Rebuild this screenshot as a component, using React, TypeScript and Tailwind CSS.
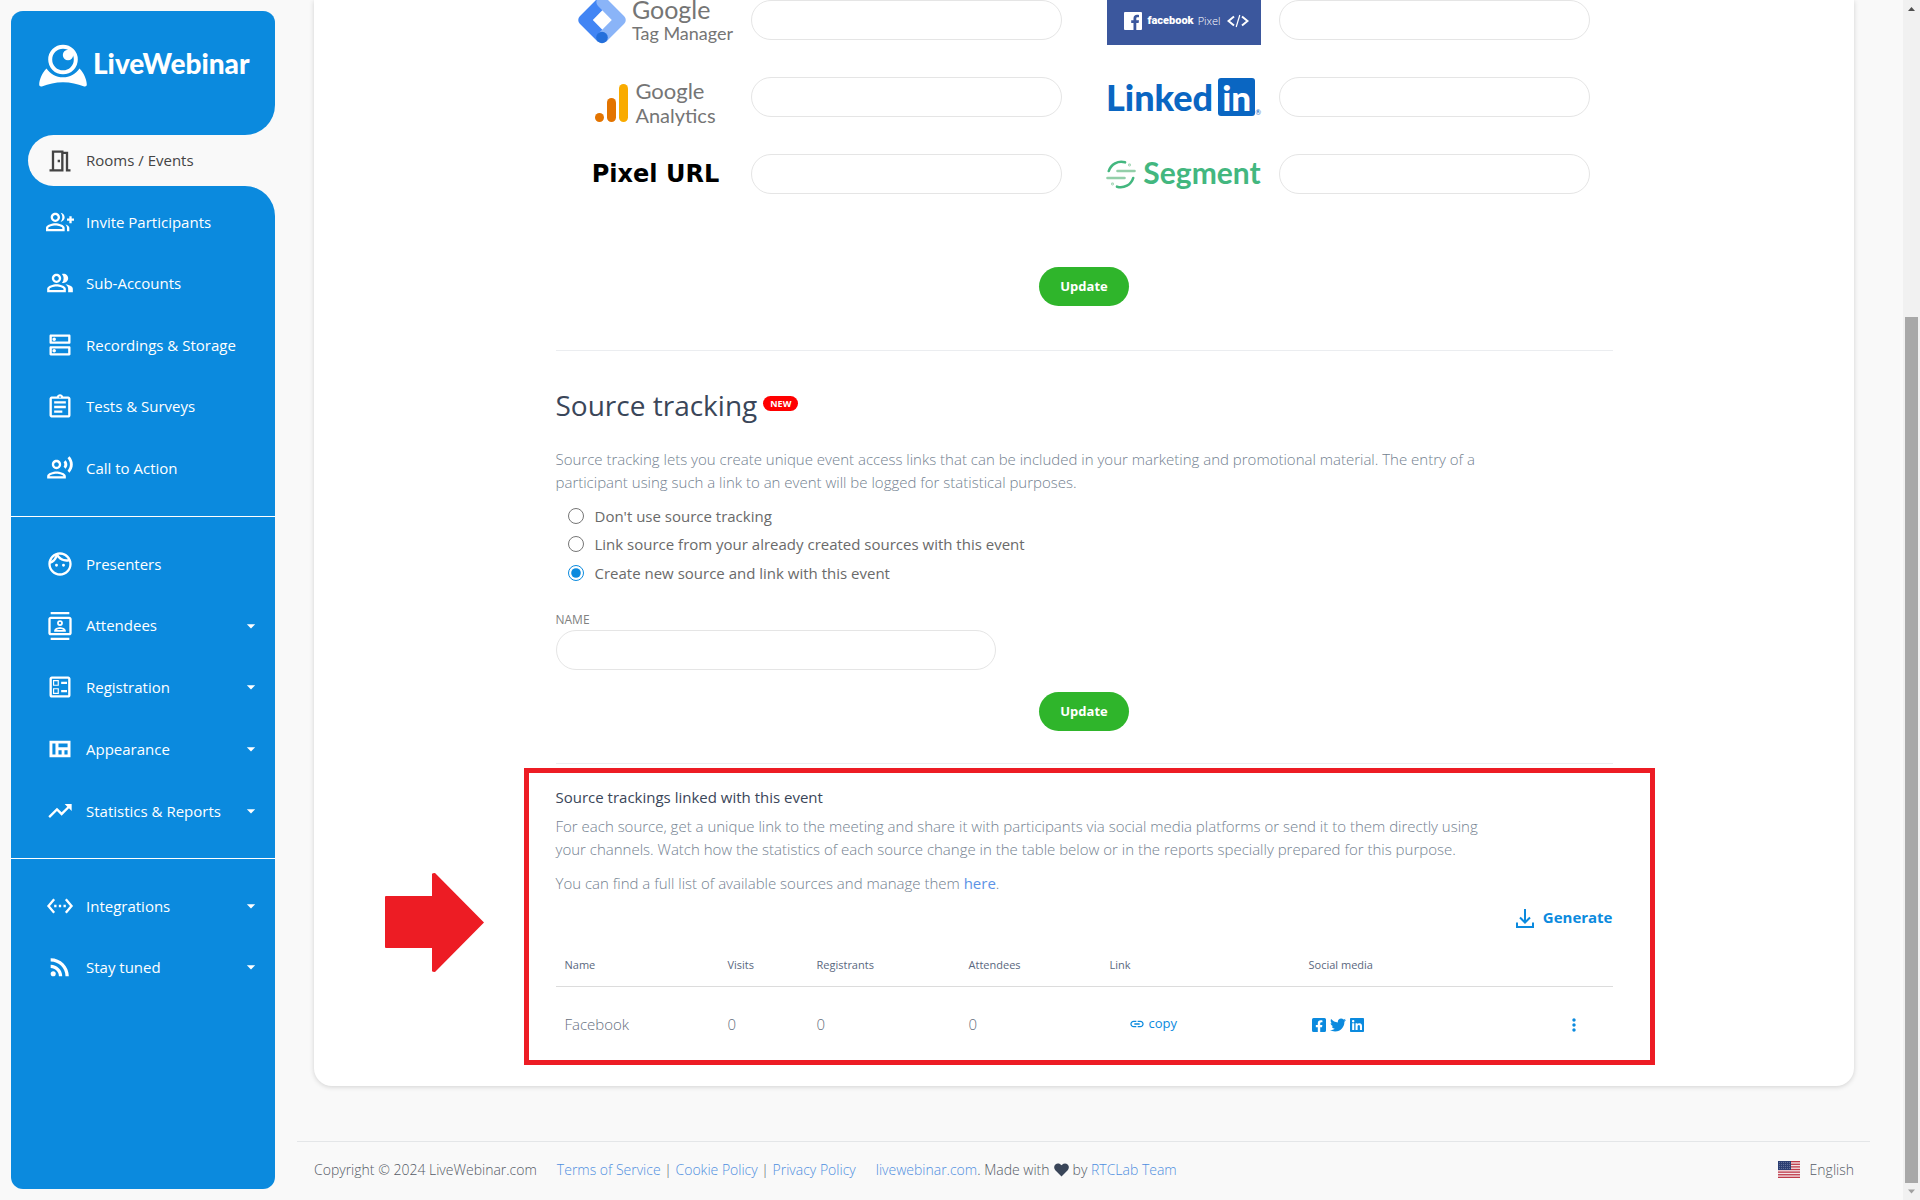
import type { ComponentType, ReactNode } from "react";
import {
  MdArrowDropDown,
  MdLink,
  MdMoreVert,
  MdOutlineAssignment,
  MdOutlineBallot,
  MdOutlineContacts,
  MdOutlineDns,
  MdOutlineFace,
  MdOutlineGroupAdd,
  MdOutlineMeetingRoom,
  MdOutlinePeopleAlt,
  MdOutlineRecordVoiceOver,
  MdRssFeed,
  MdSettingsEthernet,
  MdTrendingUp,
} from "react-icons/md";
import { FaFacebookSquare, FaLinkedin, FaTwitter } from "react-icons/fa";

type Item = { label: string; icon: ComponentType<{ className?: string }>; menu?: boolean };

function QuiltIcon({ className }: { className?: string }) {
  return (
    <svg viewBox="0 0 24 24" className={className} fill="currentColor" fillRule="evenodd" aria-hidden="true">
      <path d="M3 5h18v14H3zM5.500 7.300v9.400h2.600V7.300zM10.700 7.300v3.200h7.800V7.300zM10.700 13v3.700h2.700V13zM15.800 13v3.700h2.700V13z" />
    </svg>
  );
}

const primary: Item[] = [
  { label: "Invite Participants", icon: MdOutlineGroupAdd },
  { label: "Sub-Accounts", icon: MdOutlinePeopleAlt },
  { label: "Recordings & Storage", icon: MdOutlineDns },
  { label: "Tests & Surveys", icon: MdOutlineAssignment },
  { label: "Call to Action", icon: MdOutlineRecordVoiceOver },
];

const secondary: Item[] = [
  { label: "Presenters", icon: MdOutlineFace },
  { label: "Attendees", icon: MdOutlineContacts, menu: true },
  { label: "Registration", icon: MdOutlineBallot, menu: true },
  { label: "Appearance", icon: QuiltIcon, menu: true },
  { label: "Statistics & Reports", icon: MdTrendingUp, menu: true },
];

const tertiary: Item[] = [
  { label: "Integrations", icon: MdSettingsEthernet, menu: true },
  { label: "Stay tuned", icon: MdRssFeed, menu: true },
];

function NavItem({ item }: { item: Item }) {
  const Icon = item.icon;
  return (
    <li className="flex items-center">
      <a href="#" className="flex flex-1 items-center pr-[14px] pl-[35px] text-[15px] font-medium text-white">
        <Icon className="mr-3 size-7 shrink-0" />
        <span className="flex-1">{item.label}</span>
        {item.menu && <MdArrowDropDown className="size-5" />}
      </a>
    </li>
  );
}

function WebcamLogo() {
  return (
    <svg viewBox="0 0 48 43" className="h-[43px] w-12 shrink-0" fill="#fff" aria-hidden="true">
      <circle cx="24" cy="15.500" r="12.800" fill="none" stroke="#fff" strokeWidth="4" />
      <circle cx="29" cy="11" r="5.200" />
      <path d="M7.500 24.500C3 29 .2 36 .2 40.500c0 1.500 1 2.300 2.600 1.900C10 40 16 38.200 24 38.200S38 40 45.200 42.400c1.600.4 2.600-.4 2.600-1.900 0-4.500-2.800-11.500-7.300-16C36.500 30 31 33.300 24 33.300S11.500 30 7.500 24.500z" />
    </svg>
  );
}

function Sidebar() {
  return (
    <aside className="sticky top-0 h-screen w-[286px] shrink-0 p-[11px]">
      <nav className="flex h-full flex-col overflow-hidden rounded-xl bg-[#0b8ade]">
        <div className="bg-[#f9f9f9]">
          <div className="flex h-[124px] items-start gap-[6px] rounded-br-[30px] bg-[#0b8ade] pt-[33px] pl-7">
            <WebcamLogo />
            <span className="font-['Lato'] text-[28px] leading-[38px] font-black text-white">LiveWebinar</span>
          </div>
        </div>
        <div className="bg-[#0b8ade] pl-[17px]">
          <a href="#" className="flex h-[51px] items-center rounded-l-full bg-[#f9f9f9] pl-[18px] text-[15px] text-[#444]">
            <MdOutlineMeetingRoom className="mr-3 size-7" />
            Rooms / Events
          </a>
        </div>
        <div className="bg-[#f9f9f9]">
          <div className="rounded-tr-[30px] bg-[#0b8ade] pt-[5px] pb-[17px]">
            <ul className="grid h-[308px] auto-rows-fr">
              {primary.map((i) => (
                <NavItem key={i.label} item={i} />
              ))}
            </ul>
          </div>
        </div>
        <div className="border-y border-white py-4">
          <ul className="grid h-[309px] auto-rows-fr">
            {secondary.map((i) => (
              <NavItem key={i.label} item={i} />
            ))}
          </ul>
        </div>
        <ul className="mt-4 grid h-[123px] auto-rows-fr">
          {tertiary.map((i) => (
            <NavItem key={i.label} item={i} />
          ))}
        </ul>
      </nav>
    </aside>
  );
}

function TagManagerLogo() {
  return (
    <div className="flex items-center gap-[6px]">
      <svg viewBox="0 0 48 48" className="size-12 shrink-0" aria-hidden="true">
        <path d="M19.800 2.200 1.800 20.200a5.400 5.400 0 0 0 0 7.600l18 18 8.200-8.200L14.800 24 28 10.400z" fill="#4285f4" />
        <path d="M46.200 20.200 28 2a5.600 5.600 0 0 0-8 8l13.800 14L20.200 37.800l8 8 18-18a5.400 5.400 0 0 0 0-7.600z" fill="#8ab4f8" />
        <circle cx="24" cy="41.500" r="5.800" fill="#246fdb" />
      </svg>
      <div className="pt-[2px] font-['Lato'] whitespace-nowrap text-[#757575]">
        <div className="text-[25px] leading-[24px]">Google</div>
        <div className="text-[18px] leading-[24px]">Tag Manager</div>
      </div>
    </div>
  );
}

function AnalyticsLogo() {
  return (
    <div className="flex items-center gap-[6px] pt-[11px]">
      <svg viewBox="0 0 34 40" className="h-10 w-[34px] shrink-0" aria-hidden="true">
        <circle cx="4.500" cy="34.500" r="4.500" fill="#e37400" />
        <rect x="12" y="15" width="9" height="24" rx="4.500" fill="#e37400" />
        <rect x="24" y="1" width="9" height="38" rx="4.500" fill="#f9ab00" />
      </svg>
      <div className="font-['Lato'] whitespace-nowrap text-[#757575]">
        <div className="text-[22px] leading-[24px]">Google</div>
        <div className="text-[20px] leading-[24px]">Analytics</div>
      </div>
    </div>
  );
}

function FacebookPixelLogo() {
  return (
    <div className="flex h-[50px] w-full items-center bg-[#3b579d] pt-[2px] pl-[17px] text-[11px] text-white">
      <svg viewBox="0 0 18 18" className="mr-[6px] size-[18px] shrink-0" aria-hidden="true">
        <rect width="18" height="18" rx="1" fill="#fff" />
        <path d="M12.300 18v-7h2.300l.4-2.700h-2.700V6.600c0-.8.300-1.300 1.400-1.300H15V2.900c-.3 0-1.100-.1-2-.1-2.100 0-3.500 1.200-3.500 3.500v2H7.200V11h2.300v7z" fill="#3b579d" />
      </svg>
      <span className="mr-1 font-['Roboto'] font-black">facebook</span>
      <span className="mr-[6px] font-['Open_Sans'] font-light">Pixel</span>
      <svg viewBox="0 0 22 14" className="h-[14px] w-[22px] shrink-0" fill="none" stroke="#fff" strokeWidth="2" aria-hidden="true">
        <path d="M7 2.500 1.500 7 7 11.500M15 2.500 20.500 7 15 11.500" />
        <path d="M12.800 1 9.200 13" strokeWidth="1.200" />
      </svg>
    </div>
  );
}

function LinkedInLogo() {
  return (
    <div className="flex items-end text-[#0a66c2]">
      <span className="font-['Lato'] text-[36px] leading-[38px] font-black">Linked</span>
      <span className="ml-[5px] flex h-[38px] w-[37px] items-center justify-center rounded-[3px] bg-[#0a66c2] font-['Lato'] text-[35px] leading-[38px] font-black text-white">
        in
      </span>
      <span className="font-['Lato'] text-[7px] leading-[8px]">®</span>
    </div>
  );
}

function SegmentLogo() {
  return (
    <div className="flex items-center gap-[7px]">
      <svg viewBox="0 0 30 29" className="h-[29px] w-[30px] shrink-0" fill="none" strokeWidth="2.600" strokeLinecap="round" aria-hidden="true">
        <path d="M2.800 11A13 13 0 0 1 19 2.300M27.200 18A13 13 0 0 1 11 26.700" stroke="#43b77f" />
        <path d="M11.500 11H28.500M1.500 18H18.500" stroke="#93cfa9" />
        <circle cx="23.500" cy="5" r=".4" stroke="#93cfa9" strokeWidth="2" />
        <circle cx="6.500" cy="24" r=".4" stroke="#93cfa9" strokeWidth="2" />
      </svg>
      <span className="pb-1 font-['Lato'] text-[30px] leading-[36px] font-bold text-[#43b77f]">Segment</span>
    </div>
  );
}

function PixelUrlLogo() {
  return <span className="font-['DejaVu_Sans'] text-[24px] font-bold text-black">Pixel URL</span>;
}

const integrations: { name: string; logo: ReactNode }[] = [
  { name: "Google Tag Manager", logo: <TagManagerLogo /> },
  { name: "Facebook Pixel", logo: <FacebookPixelLogo /> },
  { name: "Google Analytics", logo: <AnalyticsLogo /> },
  { name: "LinkedIn", logo: <LinkedInLogo /> },
  { name: "Pixel URL", logo: <PixelUrlLogo /> },
  { name: "Segment", logo: <SegmentLogo /> },
];

function UpdateButton() {
  return (
    <button type="button" className="mx-auto block h-[39px] w-[90px] rounded-[20px] bg-[#2fb52b] text-[13px] font-bold text-white">
      Update
    </button>
  );
}

const sourceOptions = [
  "Don't use source tracking",
  "Link source from your already created sources with this event",
  "Create new source and link with this event",
];

function SourceTracking() {
  return (
    <section>
      <div className="mt-9 flex items-start gap-[6px]">
        <h2 className="text-[28px] leading-9 text-[#3a4659]">Source tracking</h2>
        <span className="mt-[9px] h-[15px] rounded-full bg-[#ff0000] px-[7px] text-[9px] leading-[15px] font-bold text-white">NEW</span>
      </div>
      <p className="mt-[25px] max-w-[950px] text-[15px] leading-[23px] font-light text-[#737f90]">
        Source tracking lets you create unique event access links that can be included in your marketing and promotional
        material. The entry of a participant using such a link to an event will be logged for statistical purposes.
      </p>
      <fieldset className="mt-2 grid h-[85px] auto-rows-fr">
        {sourceOptions.map((label, i) => (
          <label key={label} className="flex items-center gap-[11px] pl-3 text-[15px] text-[#6a6a6a]">
            <input type="radio" name="source" defaultChecked={i === 2} className="size-4 accent-[#0b8ade]" />
            {label}
          </label>
        ))}
      </fieldset>
      <label htmlFor="source-name" className="mt-6 block text-[12px] leading-[18px] text-[#808080]">
        NAME
      </label>
      <input id="source-name" type="text" className="mt-px mb-[22px] block h-10 w-5/12 rounded-full border border-[#e5e5e5] px-4" />
      <UpdateButton />
    </section>
  );
}

function LinkedSources() {
  return (
    <section className="relative pt-[22px] text-[15px] leading-[23px]">
      <h3 className="text-[#3a4659]">Source trackings linked with this event</h3>
      <div className="max-w-[950px] font-light text-[#737f90]">
        <p className="mt-[6px]">
          For each source, get a unique link to the meeting and share it with participants via social media platforms or
          send it to them directly using your channels. Watch how the statistics of each source change in the table below
          or in the reports specially prepared for this purpose.
        </p>
        <p className="mt-[11px]">
          You can find a full list of available sources and manage them{" "}
          <a href="#" className="font-normal text-[#5d93e6]">here</a>.
        </p>
      </div>
      <div className="mt-[11px] flex justify-end">
        <button type="button" className="flex items-center gap-2 font-bold text-[#0b8ade]">
          <svg viewBox="0 0 20 20" className="size-5" fill="none" stroke="currentColor" strokeWidth="2" aria-hidden="true">
            <path d="M10 1v13M5 9.500l5 5 5-5M2 14.500V19h16v-4.500" />
          </svg>
          Generate
        </button>
      </div>
      <table className="mt-[15px] w-full table-fixed text-left">
        <colgroup>
          <col className="w-[163px]" />
          <col className="w-[89px]" />
          <col className="w-[152px]" />
          <col className="w-[141px]" />
          <col className="w-[199px]" />
          <col />
          <col className="w-[77px]" />
        </colgroup>
        <thead>
          <tr className="h-[42px] border-b border-[#dcdcdc] text-[11px] text-[#5a6880]">
            {["Name", "Visits", "Registrants", "Attendees", "Link", "Social media"].map((h) => (
              <th key={h} className="px-[9px] font-normal">{h}</th>
            ))}
            <td />
          </tr>
        </thead>
        <tbody>
          <tr className="h-[77px] font-light text-[#666f80]">
            <td className="px-[9px]">Facebook</td>
            <td className="px-[9px]">0</td>
            <td className="px-[9px]">0</td>
            <td className="px-[9px]">0</td>
            <td className="pb-[2px] pl-7">
              <button type="button" className="flex items-center gap-1 text-[13px] font-normal text-[#0b8ade]">
                <MdLink className="size-4" />
                copy
              </button>
            </td>
            <td className="pl-[11px]">
              <div className="flex gap-[3px] text-[#0b8ade]">
                <a href="#" aria-label="Facebook"><FaFacebookSquare className="size-4" /></a>
                <a href="#" aria-label="Twitter"><FaTwitter className="size-4" /></a>
                <a href="#" aria-label="LinkedIn"><FaLinkedin className="size-4" /></a>
              </div>
            </td>
            <td>
              <button type="button" aria-label="More" className="mx-auto block text-[#0b8ade]">
                <MdMoreVert className="size-5" />
              </button>
            </td>
          </tr>
        </tbody>
      </table>
      <div className="pointer-events-none absolute top-1 -right-[42px] -bottom-[2px] -left-8 border-[5px] border-[#ed1c24]" />
      <svg viewBox="0 0 99 99" className="pointer-events-none absolute top-[109px] -left-[171px] size-[99px]" aria-hidden="true">
        <path d="M1 23h46V1q0-1 3-1l49 49.500L50 99q-3 0-3-1V75H1q-1 0-1-1V24q0-1 1-1z" fill="#ed1c24" />
      </svg>
    </section>
  );
}

function UsFlag() {
  return (
    <svg viewBox="0 0 22 17" className="h-[17px] w-[22px]" aria-hidden="true">
      <rect width="22" height="17" fill="#f3e4e6" />
      {[0, 1, 2, 3, 4, 5, 6].map((n) => (
        <rect key={n} y={n * 2.62} width="22" height="1.300" fill="#bf3a4a" />
      ))}
      <rect width="13" height="9" fill="#2c3f73" />
      {[1, 3, 5, 7].map((y) => (
        <path key={y} d={`M1 ${y + 0.5}h11`} stroke="#6f7ca3" strokeWidth=".8" strokeDasharray="1 1" />
      ))}
    </svg>
  );
}

function Footer() {
  const link = "text-[#4f8fe0]";
  return (
    <footer className="mt-[55px] flex items-center border-t border-[#e4e6e8] pt-4 pr-4 pb-[19px] pl-[17px] text-[14px] leading-[23px] font-light text-[#555b66]">
      <span className="mr-5">Copyright © 2024 LiveWebinar.com</span>
      <span className="mr-5">
        <a href="#" className={link}>Terms of Service</a> | <a href="#" className={link}>Cookie Policy</a> |{" "}
        <a href="#" className={link}>Privacy Policy</a>
      </span>
      <span className="flex items-center gap-1">
        <span>
          <a href="#" className={link}>livewebinar.com</a>. Made with
        </span>
        <svg viewBox="0 0 15 14" className="h-[14px] w-[15px]" fill="#3a4659" aria-hidden="true">
          <path d="M7.500 13.500 1.300 7.200C-.3 5.500-.2 2.900 1.400 1.400 3-.1 5.400.1 6.900 1.700l.6.600.6-.6c1.500-1.600 3.900-1.800 5.500-.3s1.700 4.100.1 5.800z" />
        </svg>
        <span>
          by <a href="#" className={link}>RTCLab Team</a>
        </span>
      </span>
      <button type="button" className="ml-auto flex items-center gap-[10px]">
        <UsFlag />
        English
      </button>
    </footer>
  );
}

function Scrollbar() {
  return (
    <div className="sticky top-0 flex h-screen w-[17px] shrink-0 flex-col items-center bg-[#f1f1f1]" aria-hidden="true">
      <svg viewBox="0 0 17 17" className="size-[17px] shrink-0" fill="#505050">
        <path d="M8.500 7 12 11H5z" />
      </svg>
      <div className="flex w-[13px] flex-1 flex-col">
        <div className="flex-[300]" />
        <div className="flex-[866] bg-[#a8a8a8]" />
      </div>
      <svg viewBox="0 0 17 17" className="size-[17px] shrink-0" fill="#a0a0a0">
        <path d="M8.500 10.500 12 6.500H5z" />
      </svg>
    </div>
  );
}

export default function App() {
  return (
    <div className="flex min-h-screen items-start bg-[#f9f9f9] font-['Open_Sans',sans-serif]">
      <Sidebar />
      <div className="mr-[33px] ml-[11px] min-w-0 flex-1">
        <main className="mr-4 ml-[17px] rounded-b-[18px] bg-white px-16 pb-[23px] shadow-[0_1px_5px_rgba(0,0,0,0.16)]">
          <div className="mx-auto max-w-[1057px]">
            <div className="mb-[73px] grid grid-cols-2 gap-x-[45px] gap-y-[37px] px-[23px]">
              {integrations.map((it) => (
                <label key={it.name} className="flex h-10 items-center gap-[18px]">
                  <span className="flex w-[154px] shrink-0 justify-center">{it.logo}</span>
                  <input type="text" aria-label={it.name} className="h-10 w-full min-w-0 rounded-full border border-[#e5e5e5] px-4" />
                </label>
              ))}
            </div>
            <UpdateButton />
            <hr className="mt-11 border-[#ebedf0]" />
            <SourceTracking />
            <hr className="mt-8 border-[#ebedf0]" />
            <LinkedSources />
          </div>
        </main>
        <Footer />
      </div>
      <Scrollbar />
    </div>
  );
}
